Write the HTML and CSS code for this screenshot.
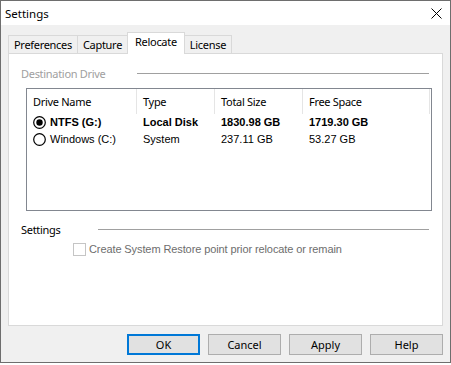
FILE: index.html
```html
<!DOCTYPE html>
<html lang="en">
<head>
  <meta charset="UTF-8">
  <title>Settings</title>
  <link rel="stylesheet" href="styles.css">
</head>
<body>
<div class="window">
  <div class="titlebar">
    <span class="title">Settings</span>
    <svg class="close" width="11" height="11" viewBox="0 0 11 11">
      <path d="M0.5 0.5 L10.5 10.5 M10.5 0.5 L0.5 10.5" stroke="#000" stroke-width="1" fill="none"/>
    </svg>
  </div>
  <div class="content">
    <div class="tabs">
      <div class="tab">Preferences</div>
      <div class="tab">Capture</div>
      <div class="tab active">Relocate</div>
      <div class="tab">License</div>
    </div>
    <div class="panel">
      <div class="group disabled">
        <span class="label label-dest">Destination Drive</span>
        <i class="rule"></i>
      </div>
      <div class="list">
        <div class="row head">
          <div class="cell c1">Drive Name</div>
          <div class="cell c2">Type</div>
          <div class="cell c3">Total Size</div>
          <div class="cell c4">Free Space</div>
        </div>
        <div class="row item bold">
          <div class="cell c1">
            <svg class="radio" width="13" height="13" viewBox="0 0 13 13">
              <circle cx="6.5" cy="6.5" r="5.8" fill="#fff" stroke="#000" stroke-width="1.2"/>
              <circle cx="6.5" cy="6.5" r="3.2" fill="#000"/>
            </svg>
            NTFS (G:)
          </div>
          <div class="cell c2">Local Disk</div>
          <div class="cell c3">1830.98 GB</div>
          <div class="cell c4">1719.30 GB</div>
        </div>
        <div class="row item">
          <div class="cell c1">
            <svg class="radio" width="13" height="13" viewBox="0 0 13 13">
              <circle cx="6.5" cy="6.5" r="5.8" fill="#fff" stroke="#000" stroke-width="1.2"/>
            </svg>
            Windows (C:)
          </div>
          <div class="cell c2">System</div>
          <div class="cell c3">237.11 GB</div>
          <div class="cell c4">53.27 GB</div>
        </div>
      </div>
      <div class="group">
        <span class="label label-set">Settings</span>
        <i class="rule"></i>
      </div>
      <label class="check">
        <span class="box"></span>
        Create System Restore point prior relocate or remain
      </label>
    </div>
    <div class="buttons">
      <button class="btn default">OK</button>
      <button class="btn">Cancel</button>
      <button class="btn">Apply</button>
      <button class="btn">Help</button>
    </div>
  </div>
</div>
</body>
</html>
```

FILE: styles.css
```css
html,
body {
  margin: 0;
  padding: 0;
  background: #fff;
  font-family: 'Noto Sans', 'Open Sans', sans-serif;
  font-size: 11px;
  letter-spacing: -0.3px;
  color: #000;
}
.window {
  width: 451px;
  height: 363px;
  box-sizing: border-box;
  border: 1px solid #6e6e6e;
  background: #f0f0f0;
  display: flex;
  flex-direction: column;
}
.titlebar {
  height: 24px;
  background: #fff;
  display: flex;
  align-items: center;
  justify-content: space-between;
  padding: 0 8px 0 4px;
}
.title {
  font-size: 11.5px;
  letter-spacing: 0;
}
.close {
  display: block;
}
.content {
  padding: 8px 7px 0;
}
.tabs {
  display: flex;
  align-items: flex-end;
  height: 20px;
}
.tab {
  height: 17px;
  line-height: 17px;
  padding: 0 5px;
  border: 1px solid #d9d9d9;
  border-bottom: none;
  margin-right: -1px;
  background: #f0f0f0;
}
.tab.active {
  height: 21px;
  line-height: 18px;
  padding: 0 7px;
  background: #fff;
  margin-bottom: -1px;
  position: relative;
  z-index: 1;
}
.panel {
  height: 273px;
  box-sizing: border-box;
  background: #fff;
  border: 1px solid #d9d9d9;
  padding: 11px 10px 0 12px;
}
.group {
  display: flex;
  align-items: center;
  height: 16px;
}
.group.disabled {
  color: #a0a0a0;
}
.label-dest {
  width: 116px;
}
.label-set {
  width: 77px;
}
.rule {
  flex: 1;
  height: 1px;
  margin-right: 3px;
  background: #a0a0a0;
}
.list {
  margin: 7px 0 10px 5px;
  height: 123px;
  box-sizing: border-box;
  border: 1px solid #828790;
}
.row {
  display: flex;
}
.cell {
  flex: none;
  padding-left: 6px;
  box-sizing: border-box;
  white-space: nowrap;
}
.c1 { width: 110px; }
.c2 { width: 78px; }
.c3 { width: 88px; }
.c4 { width: 127px; }
.head .cell {
  height: 25px;
  line-height: 26px;
  border-right: 1px solid #e5e5e5;
}
.item {
  height: 17px;
  line-height: 17px;
  font-family: 'Liberation Sans', Arial, sans-serif;
  font-size: 11px;
  letter-spacing: 0;
}
.item .c1 {
  display: flex;
  align-items: center;
  gap: 4px;
}
.bold {
  font-weight: 700;
}
.radio {
  display: block;
  flex: none;
}
.check {
  display: flex;
  align-items: center;
  gap: 3px;
  margin: 4px 0 0 52px;
  height: 16px;
  color: #6d6d6d;
  font-family: 'Liberation Sans', Arial, sans-serif;
  font-size: 11px;
  letter-spacing: -0.1px;
}
.box {
  width: 13px;
  height: 13px;
  box-sizing: border-box;
  border: 1px solid #c5c5c5;
  background: #fff;
}
.buttons {
  display: flex;
  justify-content: flex-end;
  gap: 8px;
  margin-top: 8px;
}
.btn {
  width: 73px;
  height: 21px;
  box-sizing: border-box;
  border: 1px solid #adadad;
  background: #e1e1e1;
  font-family: 'Noto Sans', 'Open Sans', sans-serif;
  font-size: 11px;
  color: #000;
  padding: 0;
}
.btn.default {
  border: 2px solid #0078d7;
}
```
